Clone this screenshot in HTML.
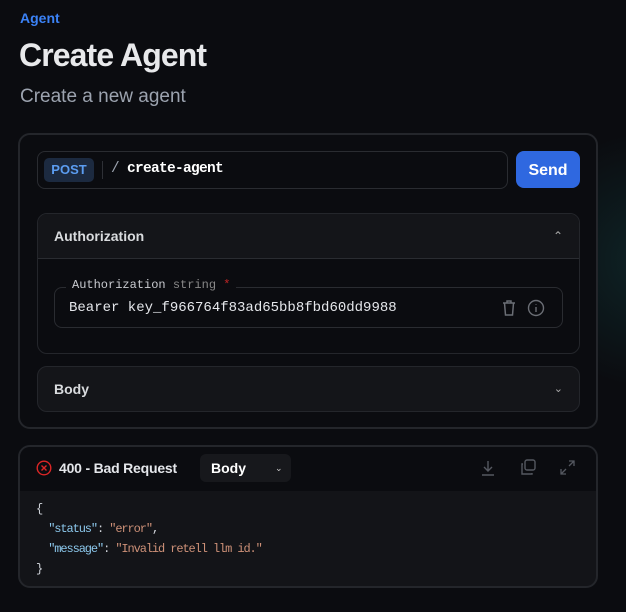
<!DOCTYPE html>
<html><head><style>
*{box-sizing:border-box;margin:0;padding:0}
body{width:626px;height:612px;overflow:hidden;background:#0b0c10;font-family:"Liberation Sans",sans-serif;color:#e5e7eb;position:relative}
.glow{position:absolute;left:520px;top:130px;width:260px;height:260px;border-radius:50%;background:radial-gradient(circle,rgba(20,80,80,.35),rgba(11,12,16,0) 70%)}
.abs{position:absolute}
.mono{font-family:"Liberation Mono",monospace}
</style></head><body>
<div class="glow"></div>
<div class="abs" style="left:20px;top:10px;font-size:14px;font-weight:bold;color:#3b82f6">Agent</div>
<div class="abs" style="left:19px;top:37px;font-size:32px;font-weight:bold;color:#e8e9eb;letter-spacing:-0.9px">Create Agent</div>
<div class="abs" style="left:20px;top:86px;font-size:19px;color:#9ca3af">Create a new agent</div>

<div class="abs" style="left:18px;top:133px;width:580px;height:296px;border:2px solid #24262b;border-radius:12px;background:#0b0c10"></div>
<div class="abs" style="left:37px;top:151px;width:471px;height:38px;border:1px solid #2a2c31;border-radius:8px"></div>
<div class="abs" style="left:44px;top:158px;width:50px;height:24px;background:#1c2a40;border-radius:5px;color:#5b9cf0;font-weight:bold;font-size:13px;text-align:center;line-height:24px">POST</div>
<div class="abs" style="left:102px;top:161px;width:1px;height:18px;background:#2e3036"></div>
<div class="abs mono" style="left:111px;top:161px;font-size:14.5px;letter-spacing:-0.7px;color:#fff;font-weight:bold"><span style="color:#9ca3af;font-weight:normal">/</span> create-agent</div>
<div class="abs" style="left:516px;top:151px;width:64px;height:37px;background:#2f68e0;border-radius:8px;color:#fff;font-weight:bold;font-size:16px;text-align:center;line-height:39px">Send</div>

<div class="abs" style="left:37px;top:213px;width:543px;height:141px;border:1px solid #24262b;border-radius:10px;overflow:hidden">
 <div style="height:45px;background:#141519;border-bottom:1px solid #2a2c31;padding-left:16px;line-height:45px;font-size:14px;font-weight:bold;color:#d9dbde">Authorization<span style="position:absolute;right:16px;font-weight:normal;color:#aaa;font-size:12px">&#8963;</span></div>
</div>
<div class="abs" style="left:54px;top:287px;width:509px;height:41px;border:1px solid #2a2c31;border-radius:8px"></div>
<div class="abs mono" style="left:66px;top:278px;padding:0 6px;background:#0b0c10;font-size:12px;color:#c9cbd0">Authorization <span style="color:#888">string</span> <span style="color:#c02626">*</span></div>
<div class="abs mono" style="left:69px;top:300px;font-size:14px;color:#e5e7eb">Bearer key_f966764f83ad65bb8fbd60dd9988</div>
<svg class="abs" style="left:501px;top:299px" width="16" height="18" viewBox="0 0 16 18" fill="none" stroke="#6b6e75" stroke-width="1.5"><path d="M2 4h12M6 4V2h4v2M3.5 4l1 12h7l1-12"/></svg>
<svg class="abs" style="left:527px;top:299px" width="18" height="18" viewBox="0 0 18 18" fill="none" stroke="#6b6e75" stroke-width="1.4"><circle cx="9" cy="9" r="7.5"/><path d="M9 8v5M9 5.3v.6"/></svg>

<div class="abs" style="left:37px;top:366px;width:543px;height:46px;border:1px solid #24262b;border-radius:10px;background:#141519;padding-left:16px;line-height:44px;font-size:14px;font-weight:bold;color:#d9dbde">Body<span style="position:absolute;right:16px;font-weight:normal;color:#aaa;font-size:11px">&#8964;</span></div>

<div class="abs" style="left:18px;top:445px;width:580px;height:143px;border:2px solid #24262b;border-radius:12px;background:#131418;overflow:hidden">
 <div style="height:44px;background:#0b0c10"></div>
</div>
<svg class="abs" style="left:36px;top:460px" width="16" height="16" viewBox="0 0 16 16" fill="none" stroke="#dc2626" stroke-width="1.4"><circle cx="8" cy="8" r="6.8"/><path d="M5.5 5.5l5 5M10.5 5.5l-5 5"/></svg>
<div class="abs" style="left:59px;top:460px;font-size:14px;font-weight:bold;color:#e5e7eb;letter-spacing:-0.2px">400 - Bad Request</div>
<div class="abs" style="left:200px;top:454px;width:91px;height:28px;background:#17181c;border-radius:6px;padding-left:11px;line-height:28px;font-size:14px;font-weight:bold;color:#fff">Body<span style="position:absolute;left:75px;font-size:9px;color:#ccc;font-weight:normal">&#8964;</span></div>
<svg class="abs" style="left:480px;top:459px" width="16" height="18" viewBox="0 0 16 18" fill="none" stroke="#555860" stroke-width="1.4"><path d="M8 2v10M4 8l4 4 4-4M2 16h12"/></svg>
<svg class="abs" style="left:520px;top:459px" width="17" height="17" viewBox="0 0 17 17" fill="none" stroke="#555860" stroke-width="1.4"><rect x="5" y="1" width="10" height="10" rx="2"/><path d="M3 5H2v10h10v-1"/></svg>
<svg class="abs" style="left:560px;top:460px" width="15" height="15" viewBox="0 0 15 15" fill="none" stroke="#555860" stroke-width="1.3"><path d="M9 1h5v5M14 1L9 6M6 14H1V9M1 14l5-5"/></svg>
<div class="abs mono" style="left:36px;top:499px;font-size:12px;letter-spacing:-1.1px;line-height:20px;color:#d1d5db;white-space:pre">{
  <span style="color:#8cc8ec">"status"</span>: <span style="color:#ce9178">"error"</span>,
  <span style="color:#8cc8ec">"message"</span>: <span style="color:#ce9178">"Invalid retell llm id."</span>
}</div>
</body></html>
